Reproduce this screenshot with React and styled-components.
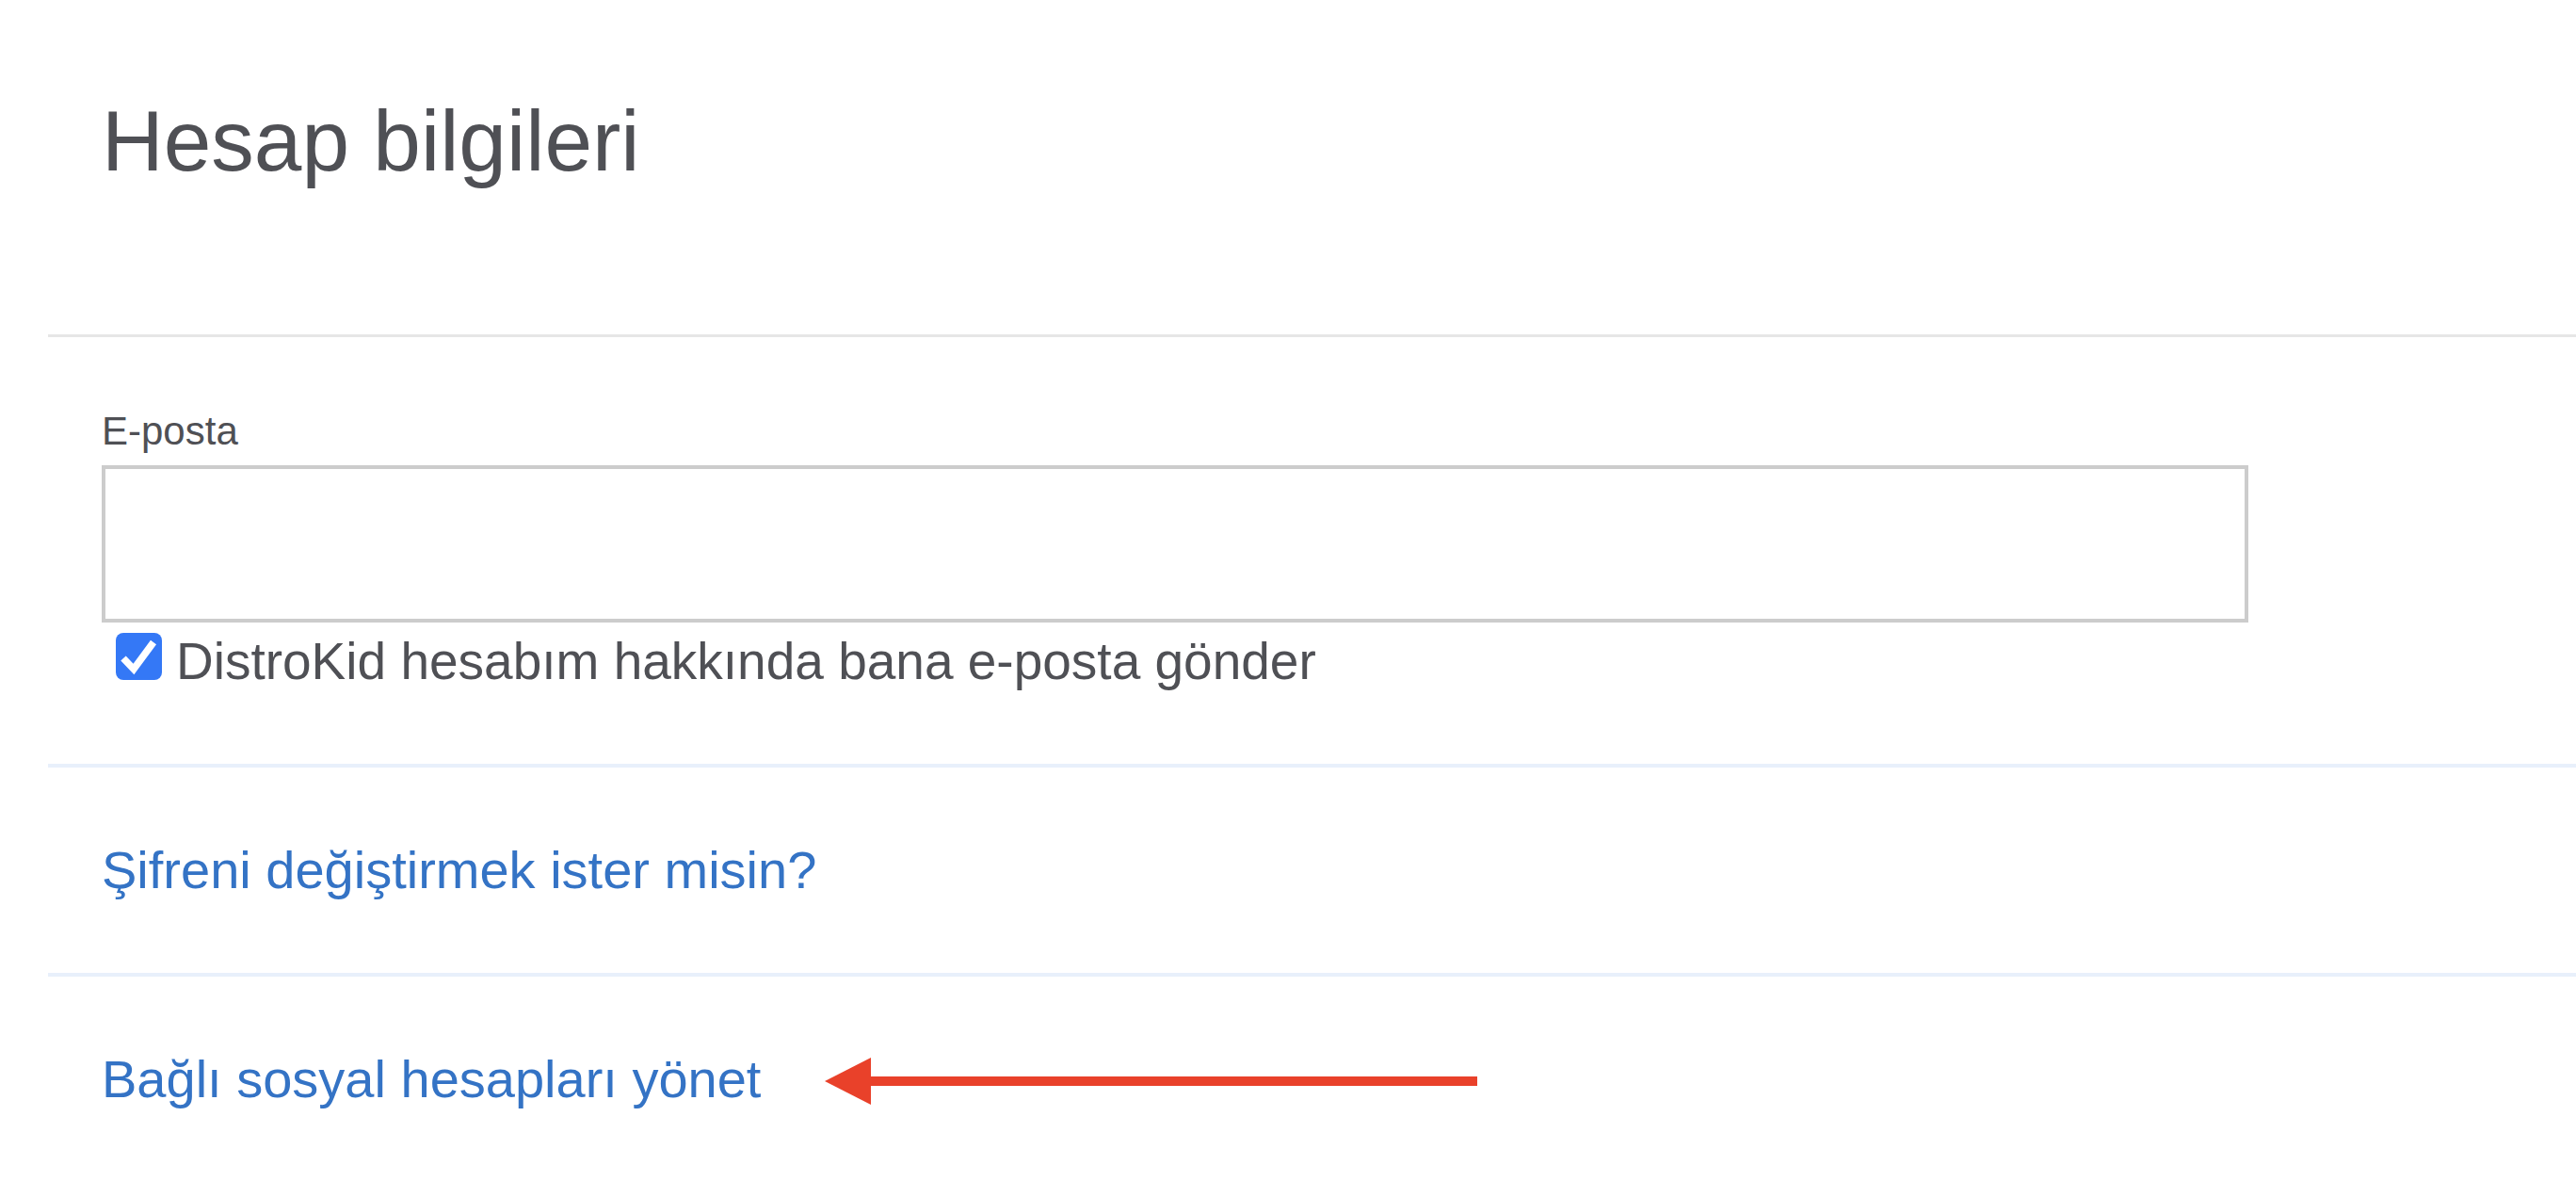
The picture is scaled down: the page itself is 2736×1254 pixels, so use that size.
import React from "react";
import styled, { createGlobalStyle } from "styled-components";

const GlobalStyle = createGlobalStyle`
  body {
    margin: 0;
    background: #ffffff;
    font-family: "Liberation Sans", Arial, sans-serif;
  }
`;

const App = () => {
  return (
    <Wrapper>
      <GlobalStyle />
      <Header>
        <Title>Hesap bilgileri</Title>
      </Header>
      <Divider />
      <EmailSection>
        <Label htmlFor="email">E-posta</Label>
        <EmailInput id="email" type="email" />
        <CheckRow>
          <CheckBox>
            <svg width="49" height="50" viewBox="0 0 49 50">
              <path
                d="M8 27 L19 38.5 L40 10"
                fill="none"
                stroke="#ffffff"
                strokeWidth="7.5"
                strokeLinejoin="miter"
              />
            </svg>
          </CheckBox>
          <CheckText>DistroKid hesabım hakkında bana e-posta gönder</CheckText>
        </CheckRow>
      </EmailSection>
      <Divider $tone="blue" />
      <LinkSection>
        <TextLink href="#">Şifreni değiştirmek ister misin?</TextLink>
      </LinkSection>
      <Divider $tone="blue" />
      <LinkSection>
        <TextLink href="#">Bağlı sosyal hesapları yönet</TextLink>
        <Arrow width="693" height="50" viewBox="0 0 693 50">
          <polygon points="0,25 49,0 49,50" fill="#e9412a" />
          <rect x="48" y="20" width="645" height="10" fill="#e9412a" />
        </Arrow>
      </LinkSection>
    </Wrapper>
  );
};

export default App;

const Wrapper = styled.div`
  padding-left: 51px;
  min-height: 1254px;
  display: flex;
  flex-direction: column;
`;

const Header = styled.div`
  padding: 104px 0 159px 57px;
`;

const Title = styled.h1`
  margin: 0;
  color: #4f5055;
  font-size: 91px;
  font-weight: 400;
  line-height: 92px;
`;

const Divider = styled.div`
  height: ${(p) => (p.$tone === "blue" ? "4px" : "3px")};
  background: ${(p) => (p.$tone === "blue" ? "#e8f0fb" : "#e6e6e6")};
`;

const EmailSection = styled.div`
  display: flex;
  flex-direction: column;
  padding: 79px 0 81px 57px;
`;

const Label = styled.label`
  color: #4f5055;
  font-size: 42px;
  line-height: 42px;
  margin-bottom: 15px;
`;

const EmailInput = styled.input`
  box-sizing: border-box;
  width: 2280px;
  height: 167px;
  border: 4px solid #cccccc;
  border-radius: 0;
  outline: none;
  background: #ffffff;
  font-family: inherit;
  font-size: 39px;
  padding: 0 20px;
`;

const CheckRow = styled.div`
  display: flex;
  align-items: flex-start;
  margin-top: 11px;
  padding-left: 15px;
`;

const CheckBox = styled.span`
  width: 49px;
  height: 50px;
  border-radius: 8px;
  background: #3478f6;
  display: flex;
  flex-shrink: 0;
`;

const CheckText = styled.span`
  margin-left: 15px;
  padding-top: 3px;
  color: #4f5055;
  font-size: 55px;
  line-height: 55px;
`;

const LinkSection = styled.div`
  display: flex;
  align-items: center;
  gap: 68px;
  padding: 81px 0 81px 57px;
`;

const TextLink = styled.a`
  color: #3473c5;
  font-size: 56px;
  line-height: 56px;
  text-decoration: none;
`;

const Arrow = styled.svg`
  flex-shrink: 0;
  margin-top: 4px;
`;
